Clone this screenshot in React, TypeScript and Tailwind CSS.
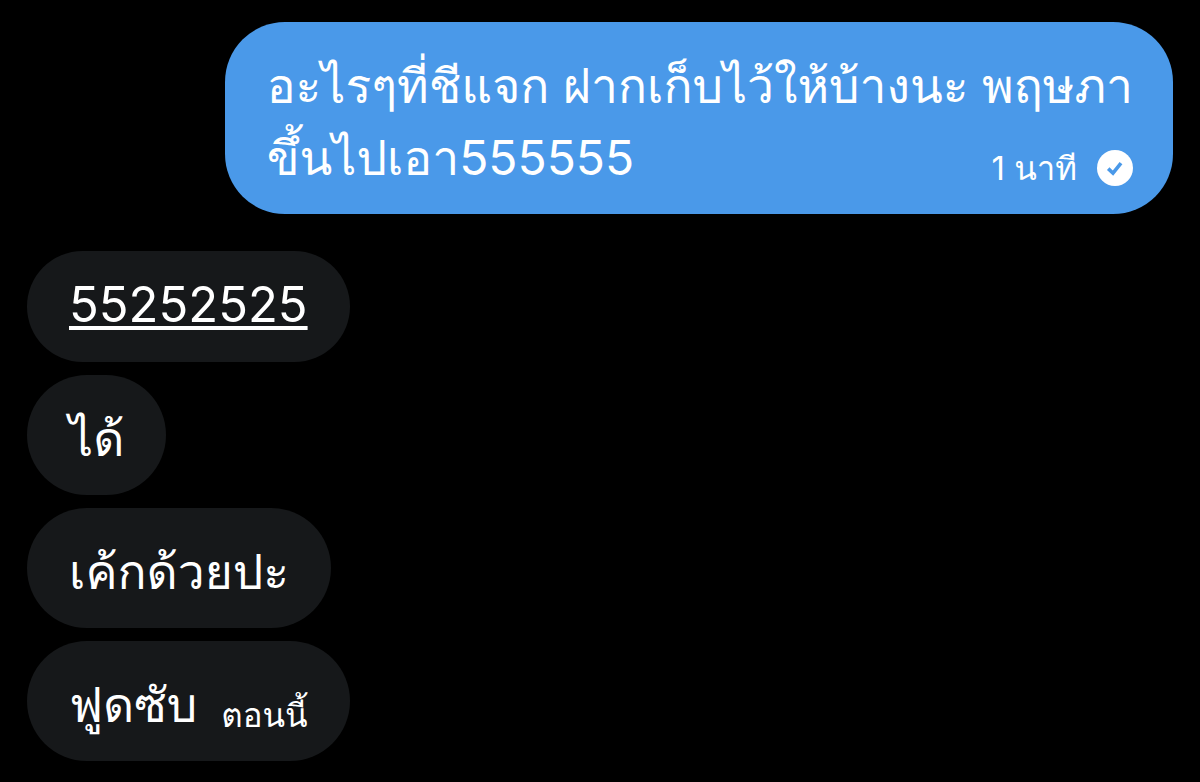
import type { ReactNode } from 'react';

const RECEIVED = ['ได้', 'เค้กด้วยปะ'];

export default function App() {
  return (
    <main
      lang="th"
      className="min-h-screen bg-black px-[27px] pt-[22px] pb-5 text-[48px] leading-[72px] text-white font-['Inter','Loma',serif]"
    >
      <div className="ml-auto w-fit rounded-[60px] bg-[#4a99e9] pt-7 pr-10 pb-5 pl-[42px] whitespace-nowrap">
        <p>อะไรๆที่ชีแจก ฝากเก็บไว้ให้บ้างนะ พฤษภา</p>
        <div className="flex items-center justify-between">
          <p>ขึ้นไปเอา555555</p>
          <SentStatus time="1 นาที" />
        </div>
      </div>

      <div className="mt-[37px] flex flex-col items-start gap-[13px]">
        <div className="rounded-[60px] bg-[#16181a] px-[42px] pt-[18px] pb-[21px] text-[49px]">
          <a href="tel:55252525" className="underline decoration-4 underline-offset-4">55252525</a>
        </div>
        {RECEIVED.map((text) => (
          <Received key={text}>{text}</Received>
        ))}
        <Received time="ตอนนี้">ฟูดซับ</Received>
      </div>
    </main>
  );
}

function SentStatus({ time }: { time: string }) {
  return (
    <div className="flex items-center gap-5 pt-5 text-[33px] leading-[52px]">
      <span>{time}</span>
      <svg viewBox="0 0 36 36" className="size-9" role="img" aria-hidden="true">
        <circle cx="18" cy="18" r="18" fill="white" />
        <path d="M11.2 18.6l4.8 4.6 8-10" fill="none" stroke="#4a99e9" strokeWidth="3.6" />
      </svg>
    </div>
  );
}

function Received({ children, time }: { children: ReactNode; time?: string }) {
  return (
    <div className="flex items-center gap-6 rounded-[60px] bg-[#16181a] px-[42px] pt-7 pb-5">
      <p>{children}</p>
      {time ? <span className="pt-5 text-[33px] leading-[52px]">{time}</span> : null}
    </div>
  );
}
